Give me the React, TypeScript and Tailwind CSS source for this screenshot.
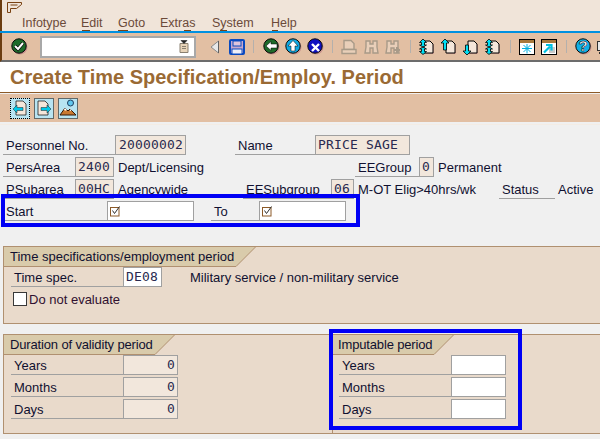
import React from "react";

const Sep = ({ className = "" }: { className?: string }) => (
  <div className={"w-px h-[13px] bg-[#b4b0ac] shrink-0 " + className} />
);

const Round = ({ fill, children, className = "" }: { fill: string; children: React.ReactNode; className?: string }) => (
  <svg width="17" height="17" viewBox="0 0 17 17" className={"shrink-0 " + className}>
    <circle cx="9" cy="9" r="7.5" fill="#c9948e" />
    <circle cx="8" cy="8" r="7.2" fill={fill} stroke="#0a0a0a" strokeWidth="1" />
    {children}
  </svg>
);

const ArrowPage = ({ d, className = "" }: { d: string; className?: string }) => (
  <svg width="16" height="16" viewBox="0 0 16 16" className={"shrink-0 " + className}>
    <path d="M6 3h6l3 3v9H6z" fill="#cf9f94" />
    <path d="M5 2h6l3 3v9H5z" fill="#f5e6da" stroke="#000" />
    <path d={d} fill="#00e0f5" stroke="#000" strokeWidth="0.8" />
  </svg>
);

const Binoc = ({ plus, className = "" }: { plus?: boolean; className?: string }) => (
  <svg width="16" height="16" viewBox="0 0 16 16" className={"shrink-0 " + className}>
    <path d="M2 2h4v3h3V2h4v6l1 6H9V9H6v5H1l1-6z" fill="#e9cfb9" stroke="#a89a88" strokeWidth="1.4" />
    {plus && <path d="M12 8v6M9 11h6" stroke="#a89a88" strokeWidth="2" />}
  </svg>
);

const Win = ({ children, className = "" }: { children: React.ReactNode; className?: string }) => (
  <svg width="16" height="16" viewBox="0 0 16 16" className={"shrink-0 " + className}>
    <rect x="0.5" y="0.5" width="15" height="15" fill="#fff" stroke="#000" />
    <rect x="1" y="1" width="14" height="3" fill="#a8793c" />
    {children}
  </svg>
);

const Tile = ({ active, children }: { active?: boolean; children: React.ReactNode }) => (
  <div
    className={
      "w-5 h-[21px] flex items-center justify-center bg-[#b8e4f2] border shrink-0 " +
      (active ? "border-dotted border-black" : "border-[#606868]")
    }
  >
    {children}
  </div>
);

const Label = ({ w, children, className = "" }: { w: string; children: React.ReactNode; className?: string }) => (
  <div
    className={
      "h-5 shrink-0 border-b border-[#a0a0a0] pl-[3px] pt-[2px] flex items-center text-[13px] whitespace-nowrap text-[#101030] " +
      w + " " + className
    }
  >
    {children}
  </div>
);

const Field = ({
  w,
  children,
  white,
  right,
  className = "",
}: {
  w: string;
  children?: React.ReactNode;
  white?: boolean;
  right?: boolean;
  className?: string;
}) => (
  <div
    className={
      "h-5 shrink-0 border border-[#a0a0a0] font-['DejaVu_Sans_Mono',monospace] text-[13px] tracking-[0.17px] px-[2px] text-[#2a2a50] whitespace-nowrap flex items-center " +
      (white ? "bg-white " : "bg-[#f2e7dc] ") +
      (right ? "justify-end " : "") +
      w + " " + className
    }
  >
    {children}
  </div>
);

const Txt = ({ children, className = "" }: { children: React.ReactNode; className?: string }) => (
  <span className={"h-5 text-[13px] leading-[22px] text-[#101030] whitespace-nowrap shrink-0 " + className}>{children}</span>
);

const Tab = ({ w, children, className = "" }: { w: string; children: React.ReactNode; className?: string }) => (
  <div className={"relative h-5 text-[13px] leading-[20px] pl-[6px] text-[#101030] bg-[#d9cbab] border-b border-[#b09070] whitespace-nowrap " + w + " " + className}>
    <svg width="20" height="20" viewBox="0 0 20 20" className="absolute left-full top-0">
      <path d="M0 19.5L19.5 0H0z" fill="#d9cbab" />
      <path d="M0 19.5L19.5 0" stroke="#b09070" fill="none" />
    </svg>
    <span className="relative">{children}</span>
  </div>
);

const Row = ({ label, value, white, pl }: { label: string; value?: string; white?: boolean; pl: string }) => (
  <div className={"flex mb-[2px] " + pl}>
    <Label w="w-[112px]">{label}</Label>
    <Field w="w-[55px]" white={white} right>{value}</Field>
  </div>
);

const Check = () => (
  <svg width="12" height="12" viewBox="0 0 12 12" className="shrink-0">
    <rect x="0.5" y="2.5" width="8.5" height="8.5" fill="none" stroke="#8c5a28" />
    <path d="M2.5 5.5l2 3 5-7" fill="none" stroke="#303030" />
  </svg>
);

const MENU = [
  { t: "Infotype", w: "w-[59px]" },
  { t: "Edit", w: "w-[37px]" },
  { t: "Goto", w: "w-[42px]" },
  { t: "Extras", w: "w-[52px]" },
  { t: "System", w: "w-[59px]" },
  { t: "Help", w: "w-[30px]" },
];

export default function App() {
  return (
    <div className="w-[600px] h-[439px] overflow-hidden bg-[#f0f0f0] font-['Liberation_Sans',Arial,sans-serif] flex flex-col">
      {/* Menu */}
      <div className="relative h-[31px] bg-[#f0e4d9] border-l-2 border-[#6b3c10] pl-[4px] flex flex-col shrink-0">
        <svg width="16" height="11" viewBox="0 0 16 11" className="mt-[2px] ml-px shrink-0">
          <path d="M.5.5h14v2l-5 4h-6v4h-3zM3.5 3h7" fill="none" stroke="#7a4212" />
        </svg>
        <div className="flex text-[12.5px] text-[#6b4a3a] mt-[2px] ml-[16px] leading-[16px]">
          {MENU.map((m) => (
            <span key={m.t} className={m.w}>{m.t}</span>
          ))}
        </div>
        <div className="absolute left-[80px] bottom-0 w-[8px] h-px bg-[#7a4212]" />
        <div className="absolute left-[116px] bottom-0 w-[10px] h-px bg-[#7a4212]" />
        <div className="absolute left-[182px] bottom-0 w-[7px] h-px bg-[#7a4212]" />
        <div className="absolute left-[218px] bottom-0 w-[7px] h-px bg-[#7a4212]" />
        <div className="absolute left-[270px] bottom-0 w-[6px] h-px bg-[#7a4212]" />
      </div>
      <div className="h-[2px] bg-[#0090e0] shrink-0" />
      {/* Toolbar */}
      <div className="h-[29px] bg-[#e2bfa3] border-l-2 border-[#6b3c10] flex items-center shrink-0 pl-[9px] border-b-2 border-b-[#6c6c6c] overflow-hidden">
        <Round fill="#1e6b2a"><path d="M4 8l3 3 5-6" fill="none" stroke="#000" strokeWidth="3.4" /><path d="M4 8l3 3 5-6" fill="none" stroke="#fff" strokeWidth="2" /></Round>
        <div className="ml-[12px] w-[156px] h-[22px] bg-white border-2 border-[#a8a8a8] flex items-center justify-end pr-[5px] shrink-0">
          <svg width="10" height="13" viewBox="0 0 10 13">
            <path d="M1 3.5h8v9H1z" fill="#e8d4b8" stroke="#8a8070" />
            <path d="M2 .5h6L5 3.5z" fill="#222" stroke="#222" strokeWidth=".6" />
            <path d="M3 6.5h4M3 8.5h4" stroke="#8a8070" />
          </svg>
        </div>
        <svg width="10" height="14" viewBox="0 0 10 14" className="ml-[14px] shrink-0">
          <path d="M8.5 1v12L1 7z" fill="#e8e8e8" stroke="#8a8a8a" />
          <path d="M8.5 1v12" stroke="#606060" />
        </svg>
        <svg width="16" height="16" viewBox="0 0 16 16" className="ml-[9px] shrink-0">
          <rect x="1" y="1" width="14" height="14" rx="1" fill="#c8a8cc" stroke="#0a4ac0" strokeWidth="2" />
          <rect x="4" y="2" width="8" height="5" fill="#e0c4dc" stroke="#0a4ac0" />
          <rect x="3" y="10" width="10" height="5" fill="#f0f0f8" stroke="#0a4ac0" />
        </svg>
        <Sep className="ml-[8px]" />
        <Round fill="#1e6b2a" className="ml-[9px]"><path d="M3 8l5-4.5V6h6v4H8v2.5z" fill="#fff" stroke="#000" strokeWidth=".5" /></Round>
        <Round fill="#10a8e0" className="ml-[5px]"><path d="M8 2.5L13 8h-3v5H6V8H3z" fill="#fff" stroke="#000" strokeWidth=".5" /></Round>
        <Round fill="#1010c0" className="ml-[5px]"><path d="M5 6l7 7M12 6l-7 7" stroke="#fff" strokeWidth="2.4" /></Round>
        <Sep className="ml-[8px]" />
        <svg width="16" height="16" viewBox="0 0 16 16" className="ml-[8px] shrink-0">
          <path d="M3 1.5h7l3 3v6H3z" fill="#e9cfb9" stroke="#a89a88" strokeWidth="1.4" />
          <path d="M1 10.5h14v4H1z" fill="#e9cfb9" stroke="#a89a88" strokeWidth="1.4" />
        </svg>
        <Binoc className="ml-[7px]" />
        <Binoc plus className="ml-[5px]" />
        <Sep className="ml-[9px]" />
        <ArrowPage className="ml-[8px]" d="M4 0L7.5 3.5H5.5V6H7.5L4 8 .5 6H2.5V3.5H.5zM4 8L7.5 10H5.5v2.5H7.5L4 15.5 .5 12.5H2.5V10H.5z" />
        <ArrowPage className="ml-[6px]" d="M4 0L8 4H5.5v7h-3V4H0z" />
        <ArrowPage className="ml-[6px]" d="M4 16L0 12h2.5V6h3v6H8z" />
        <ArrowPage className="ml-[6px]" d="M4 0L7.5 3.5H5.5V6H7.5L4 8 .5 6H2.5V3.5H.5zM4 8L7.5 10H5.5v2.5H7.5L4 15.5 .5 12.5H2.5V10H.5z" />
        <Sep className="ml-[9px]" />
        <Win className="ml-[8px]"><path d="M8 5v9.5M3 9.5h10M4.5 6l7 7M11.5 6l-7 7" stroke="#00b0e0" /></Win>
        <Win className="ml-[6px]"><rect x="8" y="8" width="6" height="6" fill="#c8c8c8" /><path d="M3 13.5l6-6M5 6h5.5v5.5" stroke="#00c0e0" strokeWidth="2.2" fill="none" /></Win>
        <Sep className="ml-[9px]" />
        <Round fill="#10b0e8" className="ml-[8px]"><text x="8" y="13" textAnchor="middle" fontSize="15" fontWeight="700" fill="#fff" stroke="#000" strokeWidth=".5" fontFamily="Liberation Sans">?</text></Round>
        <svg width="16" height="16" viewBox="0 0 16 16" className="ml-[5px] shrink-0">
          <rect x="0.5" y="2.5" width="12" height="9" fill="#e8e8e8" stroke="#303030" />
          <path d="M2 14h10" stroke="#303030" strokeWidth="2" />
        </svg>
      </div>
      {/* Title */}
      <div className="h-[31px] bg-white border-b border-[#8c5a28] shrink-0 pl-[10px] text-[20px] font-bold text-[#9a6a34] leading-[30px] whitespace-nowrap">
        Create Time Specification/Employ. Period
      </div>
      {/* App toolbar */}
      <div className="mt-px h-[28px] bg-[#e2bfa3] flex items-center gap-[4px] pl-[10px] shrink-0">
        <Tile active>
          <svg width="16" height="16" viewBox="0 0 16 16">
            <path d="M4 1h7l3 3v11H4z" fill="#f5e6da" stroke="#202020" strokeWidth=".8" />
            <path d="M1 9l4-4v2.5h6v3H5V13z" fill="#00c8e8" stroke="#202020" strokeWidth=".5" />
          </svg>
        </Tile>
        <Tile>
          <svg width="16" height="16" viewBox="0 0 16 16">
            <path d="M2 1h7l3 3v11H2z" fill="#f5e6da" stroke="#202020" strokeWidth=".8" />
            <path d="M15 9l-4-4v2.5H5v3h6V13z" fill="#00c8e8" stroke="#202020" strokeWidth=".5" />
          </svg>
        </Tile>
        <Tile>
          <svg width="18" height="18" viewBox="0 0 18 18">
            <circle cx="11.5" cy="4" r="3" fill="#60c8f0" stroke="#204060" />
            <path d="M1 16l5-7 3 3 2-2 6 6z" fill="#c87830" stroke="#301808" />
            <path d="M5 10.5l1-1.5 2 2-2 .8zM11 10l1.5 1.2-1.5 1z" fill="#fff" />
          </svg>
        </Tile>
      </div>
      {/* Body */}
      <div className="mt-[2px] flex-1 min-h-0 flex flex-col border-t border-[#f4ece4] pt-[10px]">
        <div className="flex pl-[3px] mb-[2px]">
          <Label w="w-[112px]">Personnel No.</Label>
          <Field w="w-[71px]" className="!px-[3px]">20000002</Field>
          <Label w="w-[80px]" className="ml-[49px]">Name</Label>
          <Field w="w-[95px]">PRICE SAGE</Field>
        </div>
        <div className="flex pl-[3px] mb-[2px]">
          <Label w="w-[72px]">PersArea</Label>
          <Field w="w-[39px]">2400</Field>
          <Txt className="ml-[4px] w-[237px]">Dept/Licensing</Txt>
          <Label w="w-[64px]">EEGroup</Label>
          <Field w="w-[15px]" className="!px-[2px]">0</Field>
          <Txt className="ml-[4px]">Permanent</Txt>
        </div>
        <div className="flex pl-[3px] mb-[2px]">
          <Label w="w-[72px]">PSubarea</Label>
          <Field w="w-[39px]">00HC</Field>
          <Txt className="ml-[4px] w-[125px]">Agencywide</Txt>
          <Label w="w-[88px]">EESubgroup</Label>
          <Field w="w-[23px]">06</Field>
          <Txt className="ml-[4px] w-[141px]">M-OT Elig&gt;40hrs/wk</Txt>
          <Label w="w-[56px]">Status</Label>
          <Txt className="ml-[3px]">Active</Txt>
        </div>
        <div className="flex pl-[3px] relative">
          <Label w="w-[104px]">Start</Label>
          <Field w="w-[87px]" white><Check /></Field>
          <Label w="w-[48px]" className="ml-[17px]">To</Label>
          <Field w="w-[87px]" white><Check /></Field>
          <div className="absolute left-px top-[-7px] w-[359px] h-[33px] border-4 border-[#0000f5]" />
        </div>
        {/* Time spec */}
        <div className="mt-[25px] ml-[3px] h-[78px] bg-[#e9dacb] border-y border-l border-[#b09070] shrink-0">
          <Tab w="w-[232px]">Time specifications/employment period</Tab>
          <div className="flex pl-[7px]">
            <Label w="w-[112px]">Time spec.</Label>
            <Field w="w-[39px]" white>DE08</Field>
            <Txt className="ml-[28px]">Military service / non-military service</Txt>
          </div>
          <div className="flex items-center h-[14px] mt-[5px] pl-[9px] text-[13px] text-[#301030]">
            <div className="w-[14px] h-[14px] bg-white border border-[#383838] ring-1 ring-inset ring-white mr-[2px] shrink-0" />
            <span className="pt-[2px]">Do not evaluate</span>
          </div>
        </div>
        {/* bottom */}
        <div className="relative mt-[10px] ml-[3px] h-[100px] bg-[#e9dacb] border-y border-l border-[#b09070] flex shrink-0">
          <div className="w-[328px] shrink-0">
            <Tab w="w-[151px]" className="tracking-[-0.15px]">Duration of validity period</Tab>
            <Row pl="pl-[7px]" label="Years" value="0" />
            <Row pl="pl-[7px]" label="Months" value="0" />
            <Row pl="pl-[7px]" label="Days" value="0" />
          </div>
          <div className="flex-1 border-l border-[#b09070]">
            <Tab w="w-[101px]" className="tracking-[-0.15px] !pl-[5px]">Imputable period</Tab>
            <Row pl="pl-[6px]" label="Years" white />
            <Row pl="pl-[6px]" label="Months" white />
            <Row pl="pl-[6px]" label="Days" white />
          </div>
          <div className="absolute left-[325px] top-[-6px] w-[193px] h-[101px] border-4 border-[#0000f5]" />
        </div>
      </div>
    </div>
  );
}
